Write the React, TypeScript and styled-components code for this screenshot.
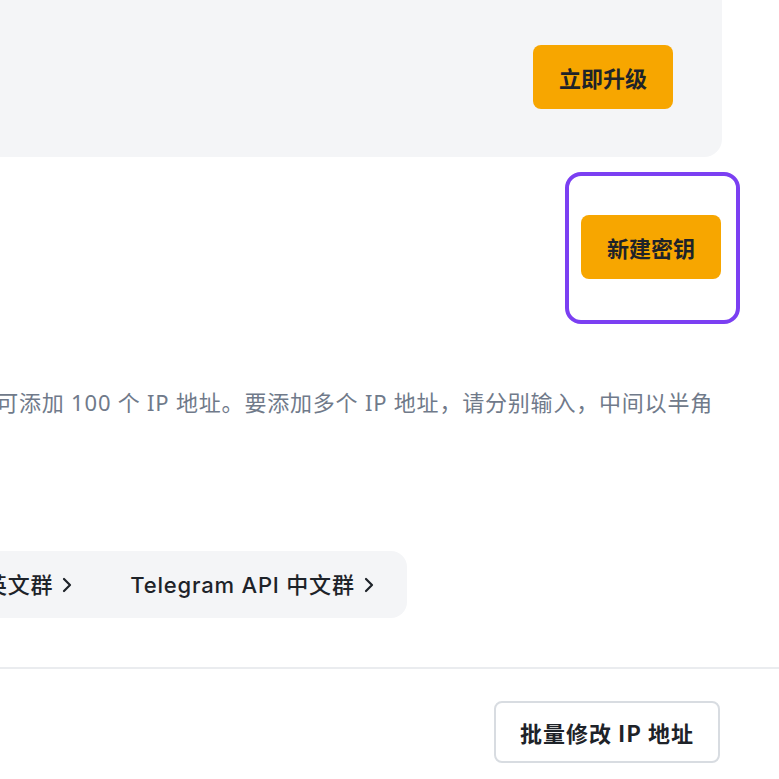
import React from 'react';
import styled, { createGlobalStyle } from 'styled-components';

let GlobalStyle = createGlobalStyle`
  html, body {
    margin: 0;
    padding: 0;
    background: #fff;
    overflow: hidden;
  }
  body {
    font-family: Inter, "Noto Sans CJK SC", sans-serif;
    color: #1e2329;
  }
`;

// ---------
// LAYOUT
// ---------

let Viewport = styled.div`
  width: 779px;
  height: 779px;
  overflow: hidden;
`;

let Page = styled.div`
  margin-left: -203px;
  width: 925px;
  display: flex;
  flex-direction: column;
`;

let Divider = styled.hr`
  width: 779px;
  margin: 49px 0 0 203px;
  border: 0;
  border-top: 2px solid #eaecef;
`;

// ---------
// BUTTONS
// ---------

let Button = styled.button<{ outline?: boolean }>`
  box-sizing: border-box;
  height: ${({ outline }) => (outline ? '62px' : '64px')};
  padding: 0 ${({ outline }) => (outline ? '24px' : '26px')};
  border: ${({ outline }) => (outline ? '2px solid #d8dce1' : '0')};
  border-radius: 8px;
  background: ${({ outline }) => (outline ? '#fff' : '#f7a600')};
  color: #1e2329;
  font-family: "Noto Sans CJK SC", sans-serif;
  font-size: 22px;
  font-weight: 700;
  line-height: 28px;
  letter-spacing: ${({ outline }) => (outline ? '1px' : '0')};
  white-space: nowrap;
  cursor: pointer;
`;

// ---------
// UPGRADE CARD
// ---------

let UpgradeCard = styled.section`
  height: 157px;
  box-sizing: border-box;
  padding: 45px 49px 0 0;
  background: #f4f5f7;
  border-radius: 0 0 18px 18px;
  display: flex;
  justify-content: flex-end;
`;

// ---------
// CREATE KEY
// ---------

let ActionRow = styled.div`
  margin-top: 58px;
  padding-right: 1px;
  display: flex;
  justify-content: flex-end;
`;

let Highlight = styled.div`
  position: relative;

  &::after {
    content: '';
    position: absolute;
    top: -43px;
    right: -19px;
    bottom: -45px;
    left: -16px;
    border: 4px solid #7b3ff2;
    border-radius: 16px;
    pointer-events: none;
  }
`;

// ---------
// NOTE
// ---------

let NoteRow = styled.div`
  margin-top: 109px;
  padding-right: 9px;
  display: flex;
  justify-content: flex-end;
`;

let Note = styled.p`
  margin: 0;
  white-space: nowrap;
  font-family: "Noto Sans", "Noto Sans CJK SC", sans-serif;
  font-size: 22px;
  line-height: 28px;
  letter-spacing: 0.8px;
  color: #707a8a;
`;

// ---------
// COMMUNITY
// ---------

let Community = styled.div`
  margin-top: 135px;
  align-self: flex-start;
  height: 67px;
  box-sizing: border-box;
  padding: 0 32px;
  background: #f4f5f7;
  border-radius: 16px;
  display: flex;
  align-items: center;
  gap: 57px;
`;

let CommunityLink = styled.a`
  display: flex;
  align-items: center;
  gap: 8px;
  font-size: 22px;
  font-weight: 500;
  line-height: 28px;
  letter-spacing: 0.8px;
  color: #1e2329;
  text-decoration: none;
  white-space: nowrap;
`;

function Chevron() {
  return (
    <svg width="12" height="18" viewBox="0 0 12 18" fill="none">
      <path d="M3 3l6 6-6 6" stroke="#1e2329" strokeWidth="2.2" strokeLinecap="round" strokeLinejoin="round" />
    </svg>
  );
}

// ---------
// FOOTER
// ---------

let FooterRow = styled.div`
  margin-top: 32px;
  padding-right: 2px;
  display: flex;
  justify-content: flex-end;
`;

export default function App() {
  return (
    <Viewport>
      <GlobalStyle />
      <Page>
        <UpgradeCard>
          <Button>立即升级</Button>
        </UpgradeCard>

        <ActionRow>
          <Highlight>
            <Button>新建密钥</Button>
          </Highlight>
        </ActionRow>

        <NoteRow>
          <Note>可添加 100 个 IP 地址。要添加多个 IP 地址，请分别输入，中间以半角</Note>
        </NoteRow>

        <Community>
          <CommunityLink href="#">
            Telegram API 英文群 <Chevron />
          </CommunityLink>
          <CommunityLink href="#">
            Telegram API 中文群 <Chevron />
          </CommunityLink>
        </Community>

        <Divider />

        <FooterRow>
          <Button outline>批量修改 IP 地址</Button>
        </FooterRow>
      </Page>
    </Viewport>
  );
}
